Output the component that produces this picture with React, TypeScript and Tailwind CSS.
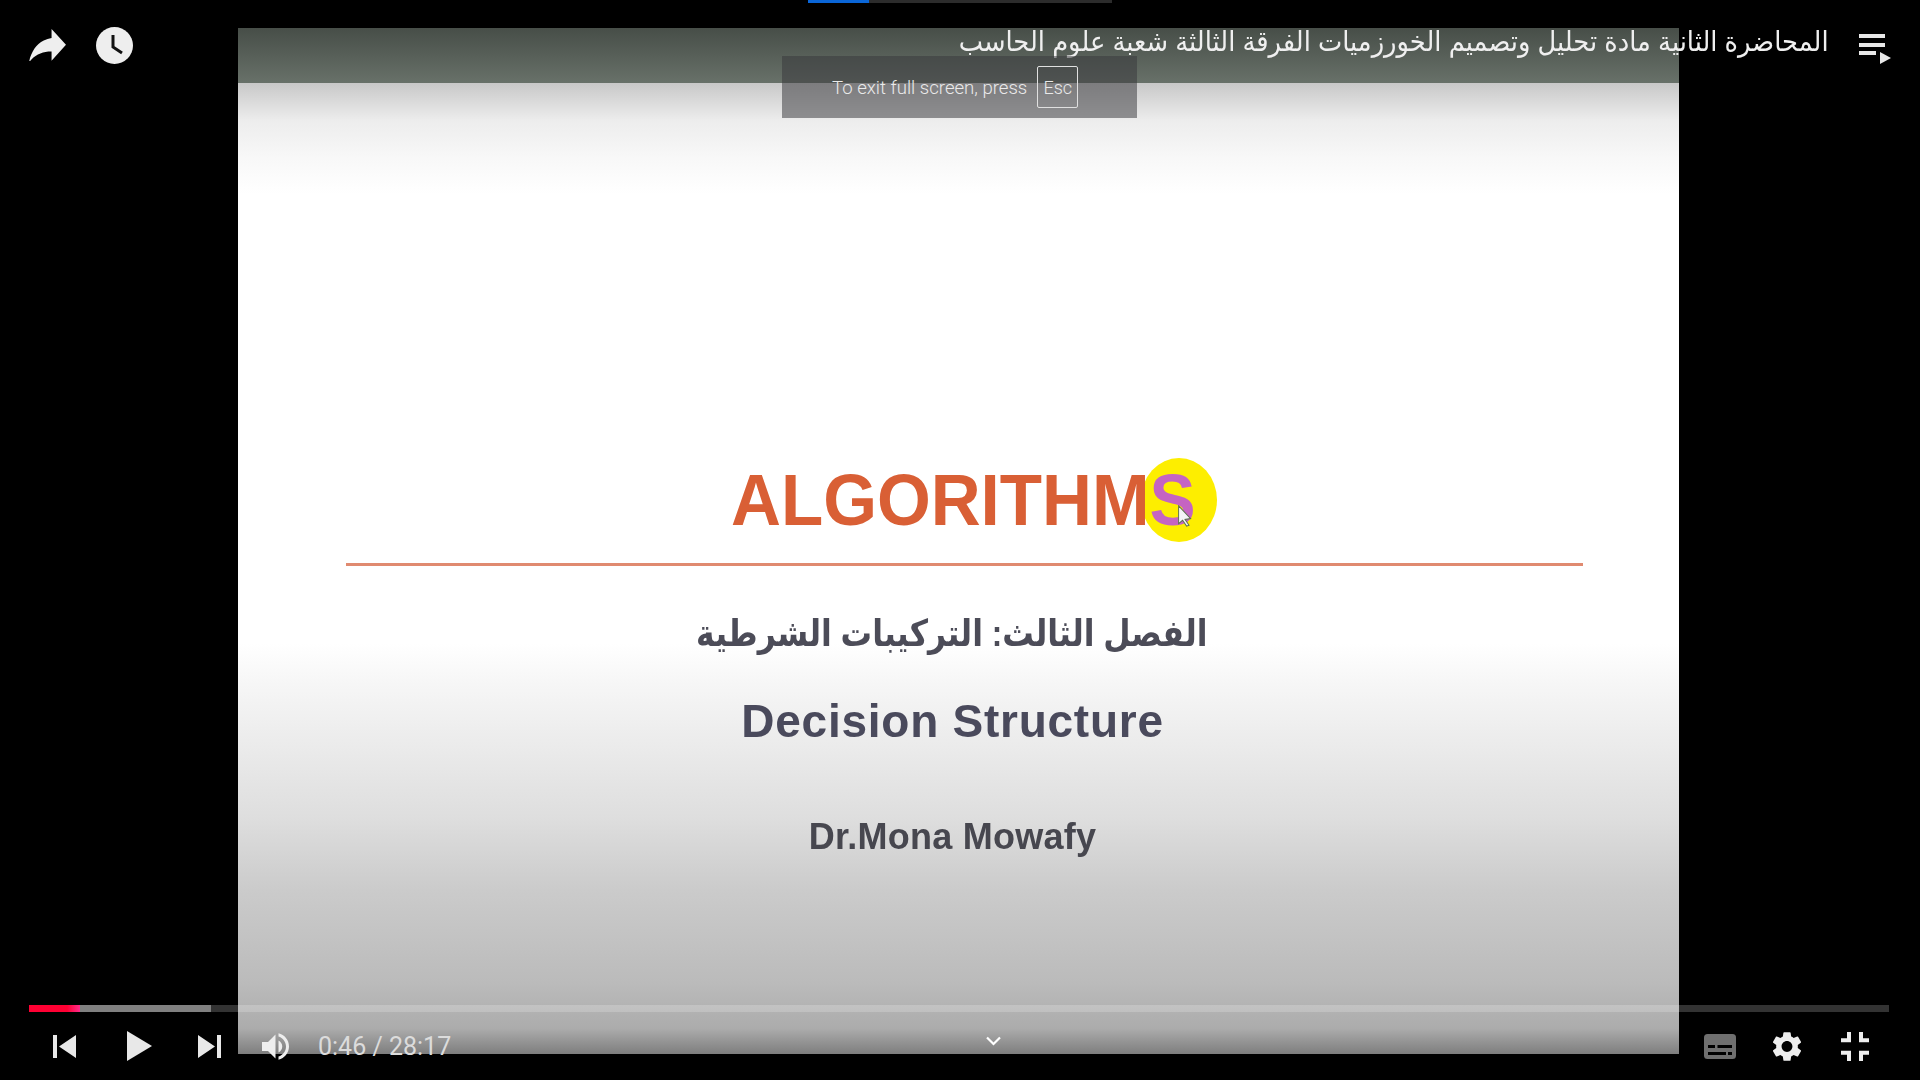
const sans = "font-['Liberation_Sans',Arial,sans-serif]";
const arabic = "font-['Liberation_Sans','DejaVu_Sans',sans-serif]";

function ShareIcon() {
  return (
    <svg width="37" height="32" viewBox="8 9.7 20 15.8" preserveAspectRatio="none" fill="#eeeeee">
      <path d="m 20.20,14.19 0,-4.45 7.79,7.79 -7.79,7.79 0,-4.56 C 16.27,20.69 12.10,21.81 9.34,24.76 8.80,25.13 7.60,27.29 8.12,25.65 9.08,21.32 11.80,17.18 15.98,15.38 c 1.33,-0.60 2.76,-0.98 4.21,-1.19 z" />
    </svg>
  );
}

function ClockIcon() {
  return (
    <svg width="37" height="37" viewBox="0 0 37 37">
      <circle cx="18.5" cy="18.5" r="18.5" fill="#eeeeee" />
      <path d="M17 8v12l9 6" fill="none" stroke="#111111" strokeWidth="3" />
    </svg>
  );
}

function PlaylistIcon() {
  return (
    <svg width="32" height="32" viewBox="0 0 32 32" fill="#e8e8e8">
      <rect x="0" y="1" width="26" height="4" />
      <rect x="0" y="10" width="26" height="4" />
      <rect x="0" y="18" width="17" height="4" />
      <path d="M21 19l11 6-11 6z" />
    </svg>
  );
}

function VolumeIcon() {
  return (
    <svg width="27" height="27" viewBox="8 9 18 18" fill="#eeeeee">
      <path d="M8,21 L12,21 L17,26 L17,10 L12,15 L8,15 L8,21 Z M19,14 L19,22 C20.48,21.32 21.5,19.77 21.5,18 C21.5,16.26 20.48,14.74 19,14 ZM19,11.29 C21.89,12.15 24,14.83 24,18 C24,21.17 21.89,23.85 19,24.71 L19,26.77 C23.01,25.86 26,22.28 26,18 C26,13.72 23.01,10.14 19,9.23 L19,11.29 Z" />
    </svg>
  );
}

function SubtitlesIcon() {
  return (
    <svg width="32" height="25" viewBox="0 0 32 25">
      <rect width="32" height="25" rx="3.5" fill="#6f6f6f" />
      <path d="M4 11h7v3H4zM13.500 11H28v3H13.500zM4 18h18v3H4zM24 18h4v3h-4z" fill="#000000" />
    </svg>
  );
}

function GearIcon() {
  return (
    <svg width="28" height="29" viewBox="2.700 2.300 18.600 19.400" preserveAspectRatio="none" fill="#eeeeee">
      <path d="M19.140 12.940c.04-.3.06-.61.06-.94 0-.32-.02-.64-.07-.94l2.030-1.580a.49.49 0 0 0 .12-.61l-1.920-3.320a.488.488 0 0 0-.59-.22l-2.390.96c-.5-.38-1.030-.7-1.620-.94l-.36-2.540a.484.484 0 0 0-.48-.41h-3.840c-.24 0-.43.17-.47.41l-.36 2.540c-.59.24-1.130.57-1.620.94l-2.390-.96c-.22-.08-.47 0-.59.22L2.740 8.870c-.12.21-.08.47.12.61l2.030 1.580c-.05.3-.09.63-.09.94s.02.64.07.94l-2.030 1.580a.49.49 0 0 0-.12.61l1.920 3.320c.12.22.37.29.59.22l2.390-.96c.5.38 1.030.7 1.620.94l.36 2.540c.05.24.24.41.48.41h3.840c.24 0 .44-.17.47-.41l.36-2.540c.59-.24 1.130-.56 1.620-.94l2.390.96c.22.08.47 0 .59-.22l1.920-3.320c.12-.22.07-.47-.12-.61l-2.010-1.580zM12 15.600c-1.980 0-3.600-1.620-3.600-3.600s1.620-3.600 3.600-3.600 3.600 1.620 3.600 3.600-1.620 3.600-3.600 3.600z" />
    </svg>
  );
}

function ExitFullscreenIcon() {
  return (
    <svg width="28" height="29" viewBox="5 5 14 14" preserveAspectRatio="none" fill="#eeeeee">
      <path d="M5 16h3v3h2v-5H5v2zm3-8H5v2h5V5H8v3zm6 11h2v-3h3v-2h-5v5zm2-11V5h-2v5h5V8h-3z" />
    </svg>
  );
}

function Slide() {
  return (
    <div className="ml-[238px] w-[1441px] h-[1026px] flex flex-col items-center bg-[linear-gradient(to_bottom,#ffffff_60%,#f6f6f6_64%,#dedede_77%,#cbcbcb_84%,#bbbbbb_93%,#acacac_97.5%,#7e7e7e_100%)]">
      <div className="w-full h-[55px] shrink-0 bg-[linear-gradient(to_bottom,#474e48,#687169)]" />
      <div className="w-full h-[111px] shrink-0 bg-[linear-gradient(to_bottom,#c8c8c8,#ededed_34%,#f8f8f8_68%,#ffffff)]" />

      <div className="relative mt-[264px] ml-[10px] h-[84px] w-[465px] shrink-0">
        <div className="absolute left-[410px] top-0 h-[84px] w-[76px] rounded-[50%] bg-[#fdee00]" />
        <div className={`${sans} relative whitespace-nowrap origin-left scale-x-[0.947] text-[73px] leading-[84px] font-bold text-[#d95f35] blur-[0.4px]`}>
          ALGORITHM<span className="text-[#c564c2]">S</span>
        </div>
        <svg className="absolute left-[446px] top-[47px]" width="16" height="22" viewBox="0 0 20 26" preserveAspectRatio="none">
          <path d="M2 1l15 15-7 1 5 7-3 1-5-7-5 4z" fill="#f4f4f8" stroke="#5a7050" strokeWidth="1.200" />
        </svg>
      </div>

      <div className="mt-[21px] ml-[12px] h-[3px] w-[1237px] shrink-0 bg-[#e08a70]" />

      <div dir="rtl" className={`${arabic} mt-[38px] -ml-[13px] h-[60px] shrink-0 whitespace-nowrap scale-x-[0.85] text-[37px] leading-[60px] font-bold text-[#4c4c58] blur-[0.5px]`}>
        الفصل الثالث: التركيبات الشرطية
      </div>
      <div className={`${sans} mt-[27px] -ml-[12px] h-[60px] shrink-0 whitespace-nowrap text-[46px] leading-[60px] tracking-[0.75px] font-bold text-[#4a4a5c] blur-[0.5px]`}>
        Decision Structure
      </div>
      <div className={`${sans} mt-[61px] -ml-[12px] h-[50px] shrink-0 whitespace-nowrap text-[36px] leading-[50px] tracking-[0.25px] font-bold text-[#47474f] blur-[0.5px]`}>
        Dr.Mona Mowafy
      </div>
    </div>
  );
}

function TopChrome() {
  return (
    <>
      <div className="absolute left-[808px] top-0 flex h-[3px] w-[304px]">
        <div className="w-[61px] bg-[#0a66d8]" />
        <div className="flex-1 bg-[#2c2c2c]" />
      </div>

      <div className="absolute inset-x-0 top-[25px] flex h-[40px] items-center pl-[29px] pr-[29px]">
        <ShareIcon />
        <div className="ml-[30px]">
          <ClockIcon />
        </div>
        <div dir="rtl" className={`${arabic} ml-auto mr-[30px] -mt-[6px] origin-right whitespace-nowrap scale-x-[0.92] text-[28px] leading-[36px] text-[#efefef]`}>
          المحاضرة الثانية مادة تحليل وتصميم الخورزميات الفرقة الثالثة شعبة علوم الحاسب
        </div>
        <div className="mt-[8px]">
          <PlaylistIcon />
        </div>
      </div>

      <div className="absolute left-[782px] top-[56px] flex h-[62px] w-[355px] items-center bg-[#38383c]/52 pl-[50px] font-['Roboto',sans-serif] text-[18.6px] font-light text-[#eaeaea]">
        <span className="mt-[3px] whitespace-nowrap">To exit full screen, press</span>
        <span className="ml-[10px] flex h-[42px] w-[41px] items-center justify-center rounded-[2px] border border-[#e0e0e0] text-[18px]">Esc</span>
      </div>
    </>
  );
}

function BottomChrome() {
  return (
    <div className="absolute inset-x-0 top-[1005px]">
      <div className="ml-[29px] flex h-[7px] w-[1860px] bg-white/20">
        <div className="w-[51px] bg-[linear-gradient(to_right,#ff0033_75%,#ff2d8c)]" />
        <div className="w-[131px] bg-[#808080]" />
      </div>

      <div className="mt-[19px] flex h-[30px] items-center pl-[53px] pr-[51px]">
        <svg width="23" height="23" viewBox="0 0 23 23" fill="#e8e8e8">
          <path d="M0 0h4v23H0zM23 0v23L6 11.500z" />
        </svg>
        <svg className="ml-[51px]" width="25" height="30" viewBox="0 0 25 30" fill="#e8e8e8">
          <path d="M0 0l25 15L0 30z" />
        </svg>
        <svg className="ml-[46px]" width="23" height="23" viewBox="0 0 23 23" fill="#e8e8e8">
          <path d="M0 0l17 11.500L0 23zM19 0h4v23h-4z" />
        </svg>
        <div className="ml-[41px]">
          <VolumeIcon />
        </div>
        <div className="ml-[29px] mt-[2px] whitespace-nowrap font-['Roboto',sans-serif] text-[25px] leading-[30px] text-[#dcdcdc]">0:46 / 28:17</div>

        <svg className="ml-[535px] -mt-[10px]" width="15" height="10" viewBox="0 0 15 10">
          <path d="M1 1.500l6.500 6.500L14 1.500" fill="none" stroke="#ffffff" strokeWidth="2.200" />
        </svg>

        <div className="ml-auto">
          <SubtitlesIcon />
        </div>
        <div className="ml-[37px]">
          <GearIcon />
        </div>
        <div className="ml-[40px]">
          <ExitFullscreenIcon />
        </div>
      </div>
    </div>
  );
}

export default function App() {
  return (
    <div className="relative h-[1080px] w-[1920px] overflow-hidden bg-black pt-[28px]">
      <Slide />
      <TopChrome />
      <BottomChrome />
    </div>
  );
}
